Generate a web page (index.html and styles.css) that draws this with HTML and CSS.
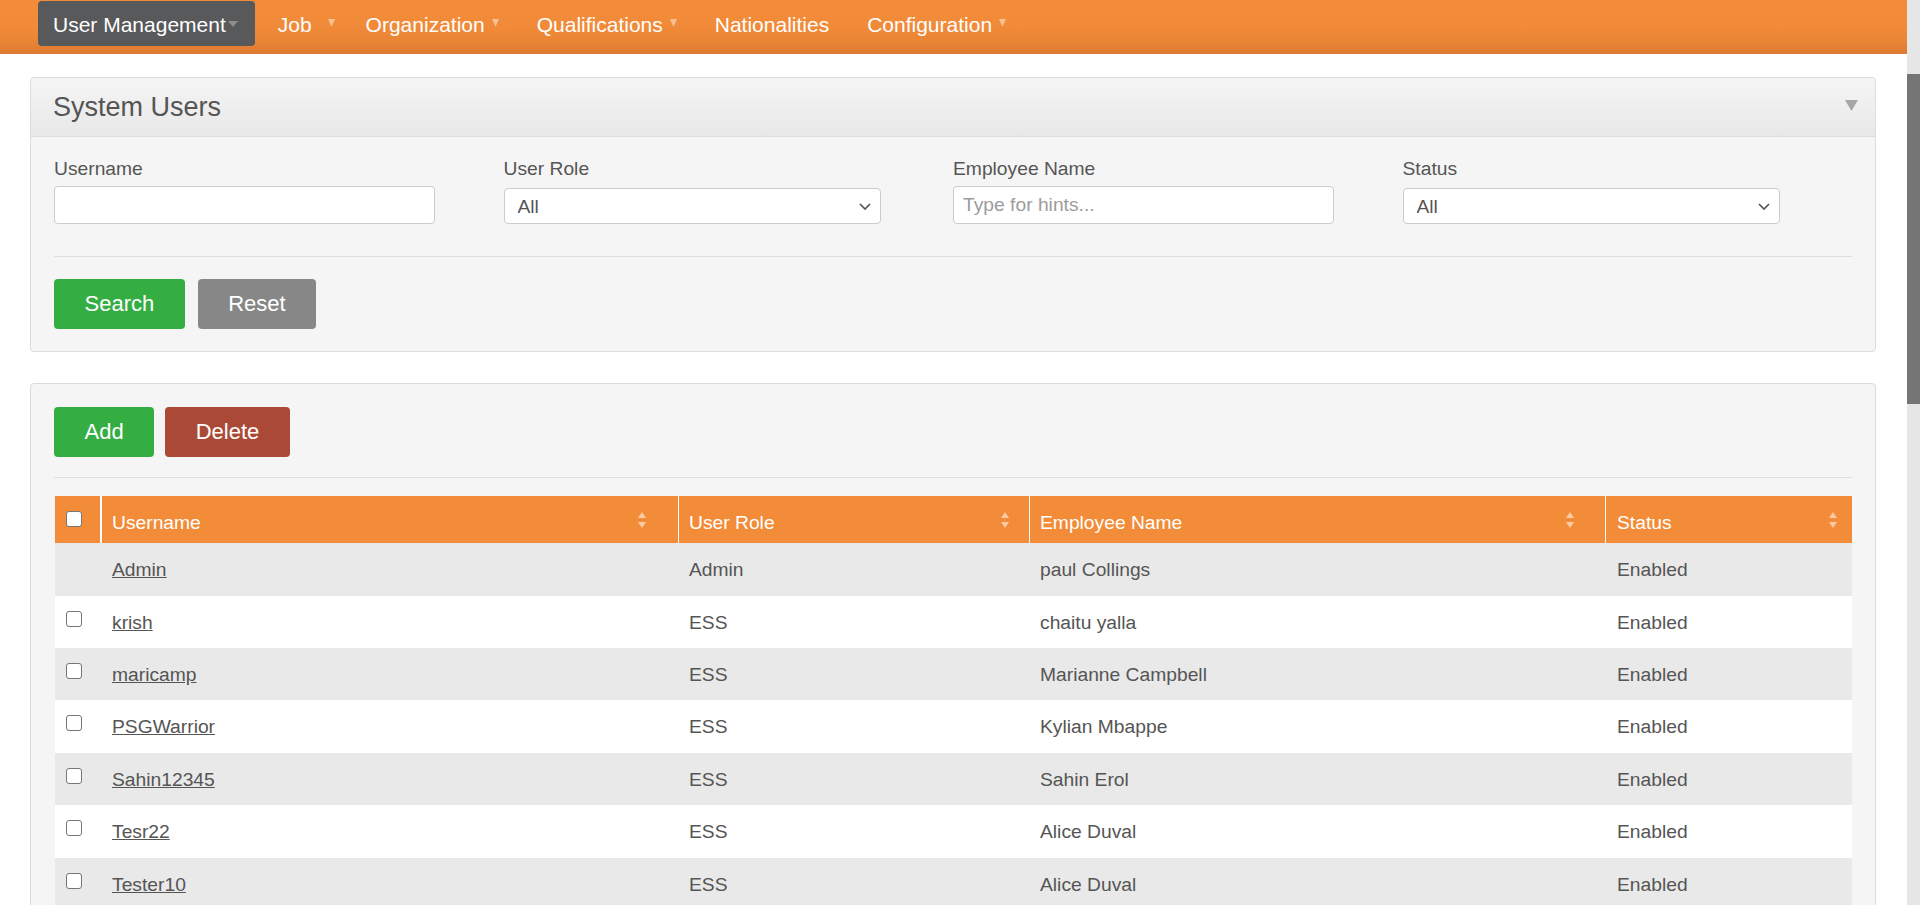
FILE: index.html
```html
<!DOCTYPE html>
<html lang="en">
<head>
<meta charset="utf-8">
<title>System Users</title>
<link rel="stylesheet" href="styles.css">
</head>
<body>
<div class="viewport">
  <div class="page">
    <nav class="topnav">
      <ul class="menu">
        <li><a class="menu-link active" href="#">User Management<svg class="caret-dark" width="10" height="6" viewBox="0 0 10 6"><polygon points="0,0 10,0 5,6"/></svg></a></li>
        <li><a class="menu-link job" href="#">Job<svg class="caret" width="7" height="8" viewBox="0 0 7 8"><polygon points="0,0 7,0 3.5,8"/></svg></a></li>
        <li><a class="menu-link" href="#">Organization<svg class="caret" width="7" height="8" viewBox="0 0 7 8"><polygon points="0,0 7,0 3.5,8"/></svg></a></li>
        <li><a class="menu-link" href="#">Qualifications<svg class="caret" width="7" height="8" viewBox="0 0 7 8"><polygon points="0,0 7,0 3.5,8"/></svg></a></li>
        <li><a class="menu-link" href="#">Nationalities</a></li>
        <li><a class="menu-link" href="#">Configuration<svg class="caret" width="7" height="8" viewBox="0 0 7 8"><polygon points="0,0 7,0 3.5,8"/></svg></a></li>
      </ul>
    </nav>

    <main class="content">
      <section class="panel">
        <div class="panel-head">
          <h1 class="panel-title">System Users</h1>
          <svg class="toggle" width="13" height="11" viewBox="0 0 13 11"><polygon points="0,0 13,0 6.5,11"/></svg>
        </div>
        <div class="panel-body">
          <div class="filters">
            <div class="field">
              <label class="field-label">Username</label>
              <input class="text-input" type="text">
            </div>
            <div class="field">
              <label class="field-label">User Role</label>
              <select class="select-input"><option>All</option><option>Admin</option><option>ESS</option></select>
            </div>
            <div class="field">
              <label class="field-label">Employee Name</label>
              <input class="text-input" type="text" placeholder="Type for hints...">
            </div>
            <div class="field">
              <label class="field-label">Status</label>
              <select class="select-input"><option>All</option><option>Enabled</option><option>Disabled</option></select>
            </div>
          </div>
          <div class="divider divider-search"></div>
          <div class="btn-row btn-row-search">
            <button class="btn btn-green" type="button">Search</button>
            <button class="btn btn-gray" type="button">Reset</button>
          </div>
        </div>
      </section>

      <section class="panel list-panel">
        <div class="panel-body list-body">
          <div class="btn-row btn-row-actions">
            <button class="btn btn-green" type="button">Add</button>
            <button class="btn btn-red" type="button">Delete</button>
          </div>
          <div class="divider divider-list"></div>
          <table class="users">
            <colgroup>
              <col class="w-cb"><col class="w-user"><col class="w-role"><col class="w-emp"><col class="w-status">
            </colgroup>
            <thead>
              <tr>
                <th class="cb-cell"><input class="cb" type="checkbox"></th>
                <th class="th-user"><div class="th-in"><span>Username</span><svg class="sort" width="8" height="16" viewBox="0 0 8 16"><polygon points="4,0 8,6 0,6"/><polygon points="0,10 8,10 4,16"/></svg></div></th>
                <th class="th-role"><div class="th-in"><span>User Role</span><svg class="sort" width="8" height="16" viewBox="0 0 8 16"><polygon points="4,0 8,6 0,6"/><polygon points="0,10 8,10 4,16"/></svg></div></th>
                <th class="th-emp"><div class="th-in"><span>Employee Name</span><svg class="sort" width="8" height="16" viewBox="0 0 8 16"><polygon points="4,0 8,6 0,6"/><polygon points="0,10 8,10 4,16"/></svg></div></th>
                <th class="th-status"><div class="th-in"><span>Status</span><svg class="sort" width="8" height="16" viewBox="0 0 8 16"><polygon points="4,0 8,6 0,6"/><polygon points="0,10 8,10 4,16"/></svg></div></th>
              </tr>
            </thead>
            <tbody>
              <tr><td class="cb-cell"></td><td><a class="user-link" href="#">Admin</a></td><td>Admin</td><td>paul Collings</td><td>Enabled</td></tr>
              <tr><td class="cb-cell"><input class="cb" type="checkbox"></td><td><a class="user-link" href="#">krish</a></td><td>ESS</td><td>chaitu yalla</td><td>Enabled</td></tr>
              <tr><td class="cb-cell"><input class="cb" type="checkbox"></td><td><a class="user-link" href="#">maricamp</a></td><td>ESS</td><td>Marianne Campbell</td><td>Enabled</td></tr>
              <tr><td class="cb-cell"><input class="cb" type="checkbox"></td><td><a class="user-link" href="#">PSGWarrior</a></td><td>ESS</td><td>Kylian Mbappe</td><td>Enabled</td></tr>
              <tr><td class="cb-cell"><input class="cb" type="checkbox"></td><td><a class="user-link" href="#">Sahin12345</a></td><td>ESS</td><td>Sahin Erol</td><td>Enabled</td></tr>
              <tr><td class="cb-cell"><input class="cb" type="checkbox"></td><td><a class="user-link" href="#">Tesr22</a></td><td>ESS</td><td>Alice Duval</td><td>Enabled</td></tr>
              <tr><td class="cb-cell"><input class="cb" type="checkbox"></td><td><a class="user-link" href="#">Tester10</a></td><td>ESS</td><td>Alice Duval</td><td>Enabled</td></tr>
            </tbody>
          </table>
        </div>
      </section>
    </main>
  </div>
  <div class="scrollbar">
    <div class="sb-space"></div>
    <div class="sb-thumb"></div>
  </div>
</div>
</body>
</html>
```

FILE: styles.css
```css
* { box-sizing: border-box; }

html, body {
  margin: 0;
  padding: 0;
  height: 100%;
}

body {
  font-family: "Liberation Sans", Arial, sans-serif;
  color: #555;
  background: #fff;
  overflow: hidden;
}

.viewport {
  display: flex;
  height: 905px;
}

.page {
  flex: 1;
  min-width: 0;
  overflow: hidden;
}

/* fake browser scrollbar */
.scrollbar {
  width: 13px;
  flex: none;
  display: flex;
  flex-direction: column;
  background: #e6e6e6;
}
.sb-space { height: 74px; }
.sb-thumb { height: 330px; background: #757575; }

/* top navigation */
.topnav {
  height: 54px;
  background: linear-gradient(to bottom, #f38c39 0%, #f28b39 45%, #eb8636 72%, #dc7a32 100%);
}

.menu {
  list-style: none;
  margin: 0;
  padding: 1px 0 0 38px;
  display: flex;
}

.menu li { margin-right: 8px; }

.menu-link {
  display: flex;
  align-items: flex-start;
  height: 45px;
  padding: 2px 15px 0 15px;
  line-height: 43px;
  font-size: 21px;
  color: #fff;
  text-decoration: none;
  border-radius: 4px;
  white-space: nowrap;
}

.menu-link.active {
  background: #58595b;
  padding-right: 17px;
}

.menu-link.job { padding-right: 8px; }

.caret {
  margin: 16px 0 0 7px;
  fill: rgba(255, 255, 255, 0.45);
}
.menu-link.job .caret { margin-left: 16px; }

.caret-dark {
  margin: 18px 0 0 2px;
  fill: #8e8e8e;
}

/* content */
.content {
  padding: 23px 31px 0 30px;
}

.panel {
  border: 1px solid #dcdcdc;
  border-radius: 4px;
  background: #f5f5f5;
}

.list-panel { margin-top: 31px; }

.panel-head {
  height: 59px;
  border-bottom: 1px solid #dcdcdc;
  border-radius: 4px 4px 0 0;
  background: linear-gradient(to bottom, #f5f5f5, #e8e8e8);
  display: flex;
  align-items: center;
  justify-content: space-between;
  padding: 0 17px 0 22px;
}

.panel-title {
  margin: 0;
  font-size: 27px;
  font-weight: normal;
  line-height: 32px;
  color: #555;
}

.toggle {
  fill: #a6a6a6;
  margin-top: -3px;
}

.panel-body {
  padding: 21px 23px 22px;
}

.filters {
  display: grid;
  grid-template-columns: repeat(4, 1fr);
}

.field {
  display: flex;
  flex-direction: column;
  align-items: flex-start;
}

.field-label {
  font-size: 19.25px;
  line-height: 22px;
  color: #555;
}

.text-input {
  margin: 6px 0 0;
  width: 381px;
  height: 38px;
  border: 1px solid #ccc;
  border-radius: 4px;
  background: #fff;
  padding: 0 9px;
  font-family: "Liberation Sans", Arial, sans-serif;
  font-size: 19.25px;
  color: #555;
  outline: none;
}
.text-input::placeholder { color: #9c9c9c; }

.select-input {
  -webkit-appearance: none;
  appearance: none;
  margin: 8px 0 0;
  width: 377px;
  height: 36px;
  border: 1px solid #ccc;
  border-radius: 4px;
  padding: 0 30px 0 13px;
  font-family: "Liberation Sans", Arial, sans-serif;
  font-size: 19.25px;
  color: #555;
  background: #fff url("data:image/svg+xml;utf8,<svg xmlns='http://www.w3.org/2000/svg' width='12' height='7' viewBox='0 0 12 7'><path d='M1 1l5 5 5-5' fill='none' stroke='%23555' stroke-width='1.7'/></svg>") no-repeat right 9px center;
  outline: none;
}

.divider {
  height: 1px;
  background: #dedede;
}
.divider-search { margin: 32px 0 22px; }
.divider-list { margin: 20px 0 18px; }

.btn-row { display: flex; }
.btn-row-search { gap: 13px; }
.btn-row-actions { gap: 11px; }

.btn {
  height: 50px;
  padding: 0 30.5px;
  border: 0;
  border-radius: 4px;
  font-family: "Liberation Sans", Arial, sans-serif;
  font-size: 22px;
  line-height: 50px;
  color: #fff;
  cursor: pointer;
}
.btn-green { background: #34ad42; }
.btn-gray { background: #878787; }
.btn-red { background: #aa4a36; }

.list-body { padding: 23px 23px 0; }

/* table */
.users {
  margin-left: 1px;
  width: calc(100% - 1px);
  border-collapse: separate;
  border-spacing: 0;
  table-layout: fixed;
  font-size: 19.25px;
}

.w-cb { width: 45px; }
.w-user { width: 578px; }
.w-role { width: 351px; }
.w-emp { width: 576px; }
.w-status { width: 247px; }

.users th {
  background: #f28c38;
  color: #fff;
  font-weight: normal;
  text-align: left;
  vertical-align: top;
  line-height: 22px;
  padding: 16px 10px 9.3px 11px;
  box-shadow: inset 1px 0 0 #fff;
}
.users th.cb-cell { box-shadow: none; }
.users th.th-user { box-shadow: inset 2px 0 0 #fff; padding-left: 12px; padding-right: 32px; }
.users th.th-role { padding-right: 20px; }
.users th.th-emp { padding-right: 31px; }
.users th.th-status { padding-left: 12px; padding-right: 15px; }

.th-in {
  display: flex;
  justify-content: space-between;
  align-items: flex-start;
}

.sort { fill: #f9cba5; flex: none; }

.users td {
  vertical-align: top;
  line-height: 22px;
  padding: 16px 10px 14.4px 11px;
  color: #555;
  white-space: nowrap;
}
.users td:nth-child(2), .users td:nth-child(5) { padding-left: 12px; }

.users tbody tr:nth-child(odd) { background: #e9e9e9; }
.users tbody tr:nth-child(even) { background: #fff; }

.cb {
  -webkit-appearance: none;
  appearance: none;
  display: block;
  width: 16px;
  height: 16px;
  margin: -1px 0 0;
  border: 1px solid #767676;
  border-radius: 3px;
  background: #fff;
}

.user-link {
  color: #555;
  text-decoration: underline;
}
```
